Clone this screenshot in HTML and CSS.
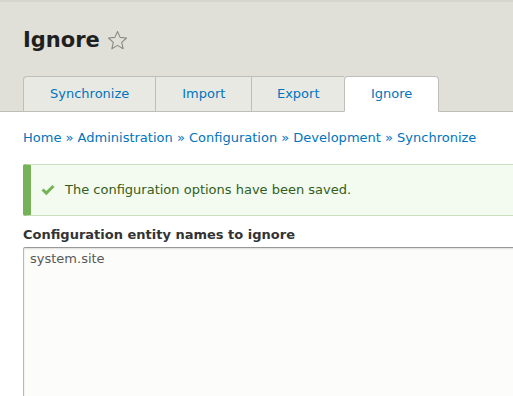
FILE: index.html
```html
<!DOCTYPE html>
<html>
<head>
    <title>Ignore</title>
    <link rel="stylesheet" href="styles.css">
</head>
<body>
    <div class="page">
        <header class="page-header">
            <div class="title-row">
                <h1 class="page-title">Ignore</h1>
                <svg class="shortcut" width="21" height="21" viewBox="0 0 21 21">
                    <path d="M10.5 1.5 L13.1 7.4 L19.5 8 L14.7 12.3 L16.1 18.7 L10.5 15.4 L4.9 18.7 L6.3 12.3 L1.5 8 L7.9 7.4 Z" fill="none" stroke="#8a8a86" stroke-width="1.1" stroke-linejoin="round"/>
                </svg>
            </div>
            <nav class="tabs">
                <a class="tab first" href="#">Synchronize</a>
                <a class="tab" href="#">Import</a>
                <a class="tab narrow" href="#">Export</a>
                <a class="tab active" href="#">Ignore</a>
            </nav>
        </header>

        <main class="content">
            <div class="breadcrumb">
                <a href="#">Home</a> » <a href="#">Administration</a> » <a href="#">Configuration</a> » <a href="#">Development</a> » <a href="#">Synchronize</a>
            </div>

            <div class="messages status">
                <svg class="check" width="14" height="14" viewBox="0 0 14 14">
                    <path d="M0.5 7.5 L2.6 5.4 L5.3 8.1 L11.4 2 L13.5 4.1 L5.3 12.3 Z" fill="#73b355"/>
                </svg>
                <span>The configuration options have been saved.</span>
            </div>

            <form class="form-item">
                <label for="ignore">Configuration entity names to ignore</label>
                <textarea id="ignore" rows="12">system.site</textarea>
            </form>
        </main>
    </div>
</body>
</html>
```

FILE: styles.css
```css
html { overflow: hidden; }
body { margin: 0; font-family: "DejaVu Sans", sans-serif; font-size: 13px; color: #222330; background: #fff; }
a { color: #0074bd; text-decoration: none; }
.page { width: 600px; }

.page-header { background: #e0e0d8; border-top: 2px solid #d6d6ce; border-bottom: 1px solid #bfbfba; padding: 24px 0 0 23px; }
.title-row { display: flex; align-items: center; height: 29px; }
.page-title { margin: 0; font-size: 21px; line-height: 29px; font-weight: bold; color: #1f1f1f; }
.shortcut { margin-left: 7px; margin-top: -1px; }

.tabs { display: flex; margin-top: 21px; margin-bottom: -1px; }
.tab { display: block; padding: 7px 26px; line-height: 20px; background: #e9e9e4; border: 1px solid #bfbfba; border-right: none; }
.tab.first { border-top-left-radius: 4px; }
.tab.narrow { padding: 7px 24.5px; }
.tab.active { background: #fff; border-right: 1px solid #bfbfba; border-bottom-color: #fff; border-radius: 4px 4px 0 0; }

.content { padding: 0 0 0 23px; }
.breadcrumb { margin-top: 16px; line-height: 20px; color: #0074bd; }

.messages { display: flex; align-items: center; gap: 10px; margin-top: 16px; padding: 15px 20px 15px 10px; line-height: 20px; border: 1px solid #c9e1bd; border-left: 8px solid #77b259; border-radius: 2px; background: #f3faef; color: #325e1c; }
.check { flex: none; }

.form-item { margin-top: 9px; }
label { display: block; margin-bottom: 2px; line-height: 20px; font-weight: bold; color: #333; }
textarea { display: block; box-sizing: border-box; width: 100%; height: 180px; margin: 0; padding: 2px 6px; font-family: "DejaVu Sans", sans-serif; font-size: 13px; line-height: 17px; color: #595959; background: #fcfcfa; border: 1px solid #b8b8b8; border-top-color: #999; border-radius: 2px; box-shadow: inset 0 1px 2px rgba(0,0,0,0.125); resize: none; }
```
